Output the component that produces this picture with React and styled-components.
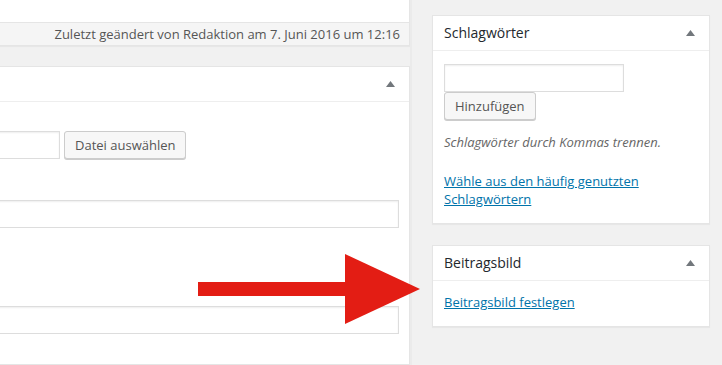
import React from 'react';
import styled, { createGlobalStyle } from 'styled-components';

const GlobalStyle = createGlobalStyle`
  html, body {
    margin: 0;
    padding: 0;
    background: #f1f1f1;
    overflow: hidden;
  }
  body {
    font-family: "Open Sans", "Liberation Sans", sans-serif;
    font-size: 13px;
    color: #444;
  }
`;

const Page = styled.div`
  position: relative;
  display: flex;
  width: 722px;
  height: 365px;
  overflow: hidden;
`;

const MainColumn = styled.div`
  flex: none;
  width: 610px;
  margin-left: -200px;
  display: flex;
  flex-direction: column;
  gap: 20px;
`;

const SideColumn = styled.div`
  flex: 1;
  box-sizing: border-box;
  padding: 15px 12px 0 20px;
  border-left: 2px solid #ebebeb;
  display: flex;
  flex-direction: column;
  gap: 21px;
`;

const Box = styled.div`
  background: #fff;
  border: 1px solid #e5e5e5;
  border-top: ${(p) => (p.$open ? 'none' : '1px solid #e5e5e5')};
  box-shadow: 0 1px 1px rgba(0, 0, 0, 0.04);
  flex: ${(p) => (p.$grow ? '1' : 'none')};
`;

const BoxTop = styled.div`
  height: 22px;
`;

const Footer = styled.div`
  height: 22px;
  border-top: 1px solid #e5e5e5;
  background: #f5f5f5;
  display: flex;
  align-items: center;
  justify-content: flex-end;
  padding: 0 9px;
  color: #555;
  font-size: 13px;
`;

const Header = styled.div`
  height: 35px;
  box-sizing: border-box;
  border-bottom: 1px solid #eee;
  display: flex;
  align-items: center;
  justify-content: space-between;
  padding: 0 14px 0 11px;
`;

const Title = styled.h2`
  margin: 0;
  font-size: 14px;
  font-weight: 400;
  color: #23282d;
  line-height: 1.4;
`;

const Toggle = styled.svg`
  width: 9px;
  height: 6px;
  fill: #72777c;
`;

const MainInside = styled.div`
  padding: 29px 10px 0 11px;
`;

const FileRow = styled.div`
  display: flex;
  align-items: center;
  gap: 4px;
`;

const TextInput = styled.input`
  box-sizing: border-box;
  display: block;
  width: ${(p) => p.$width || '100%'};
  height: 28px;
  margin: ${(p) => p.$margin || '0'};
  border: 1px solid #ddd;
  box-shadow: inset 0 1px 2px rgba(0, 0, 0, 0.07);
  background: #fff;
  font: inherit;
  outline: none;
`;

const Button = styled.button`
  box-sizing: border-box;
  height: 28px;
  padding: 0 10px 1px;
  border: 1px solid #ccc;
  border-radius: 3px;
  background: #f7f7f7;
  box-shadow: 0 1px 0 #ccc;
  color: #555;
  font-family: "Open Sans", "Liberation Sans", sans-serif;
  font-size: 13px;
  cursor: pointer;
`;

const SideInside = styled.div`
  padding: ${(p) => p.$pad || '13px 11px 15px'};
`;

const Hint = styled.p`
  margin: 13px 0 0;
  font-style: italic;
  color: #666;
  line-height: 1.5;
`;

const Link = styled.a`
  display: block;
  margin: ${(p) => p.$margin || '0'};
  color: #0073aa;
  text-decoration: underline;
  line-height: 18px;
  cursor: pointer;
`;

const Arrow = styled.svg`
  position: absolute;
  left: 196px;
  top: 252px;
  width: 226px;
  height: 74px;
`;

const ToggleIcon = () => (
  <Toggle viewBox="0 0 9 6">
    <polygon points="4.5,0 9,6 0,6" />
  </Toggle>
);

const App = () => {
  return (
    <>
      <GlobalStyle />
      <Page>
        <MainColumn>
          <Box $open>
            <BoxTop />
            <Footer>Zuletzt geändert von Redaktion am 7. Juni 2016 um 12:16</Footer>
          </Box>
          <Box $grow>
            <Header>
              <Title />
              <ToggleIcon />
            </Header>
            <MainInside>
              <FileRow>
                <TextInput $width="248px" />
                <Button>Datei auswählen</Button>
              </FileRow>
              <TextInput $margin="41px 0 0" />
              <TextInput $margin="78px 0 0" $width="100%" />
            </MainInside>
          </Box>
        </MainColumn>
        <SideColumn>
          <Box>
            <Header>
              <Title>Schlagwörter</Title>
              <ToggleIcon />
            </Header>
            <SideInside>
              <TextInput $width="180px" />
              <Button>Hinzufügen</Button>
              <Hint>Schlagwörter durch Kommas trennen.</Hint>
              <Link $margin="19px 0 0">Wähle aus den häufig genutzten Schlagwörtern</Link>
            </SideInside>
          </Box>
          <Box>
            <Header>
              <Title>Beitragsbild</Title>
              <ToggleIcon />
            </Header>
            <SideInside $pad="12px 11px 15px">
              <Link>Beitragsbild festlegen</Link>
            </SideInside>
          </Box>
        </SideColumn>
        <Arrow viewBox="0 0 226 74">
          <rect x="2" y="30" width="152" height="14" fill="#e31d14" />
          <polygon points="149,2 224,37 149,72" fill="#e31d14" />
        </Arrow>
      </Page>
    </>
  );
};

export default App;
